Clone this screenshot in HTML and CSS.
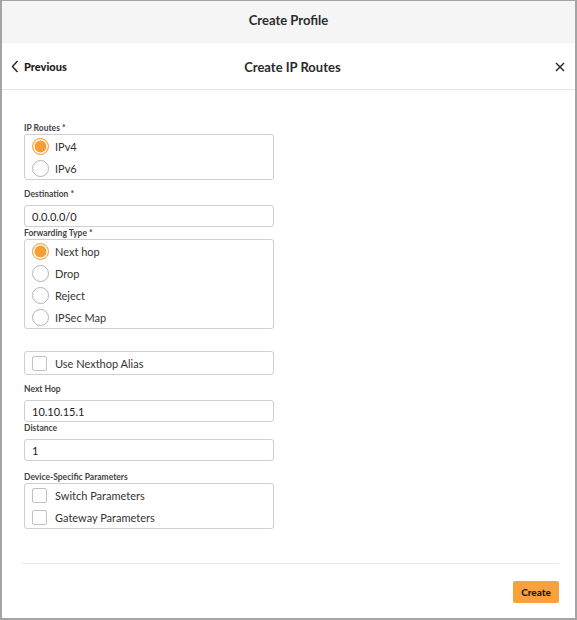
FILE: index.html
```html
<!DOCTYPE html>
<html lang="en">
<head>
  <meta charset="UTF-8">
  <meta name="viewport" content="width=device-width, initial-scale=1.0">
  <title>Create Profile</title>
  <link rel="stylesheet" href="styles.css">
</head>
<body>
  <div class="frame">
    <div class="header">Create Profile</div>

    <div class="nav">
      <button class="nav-back" type="button">
        <svg width="8" height="13" viewBox="0 0 8 13"><path d="M6.5 1 L1.5 6.5 L6.5 12" fill="none" stroke="#222" stroke-width="1.4"/></svg>
        Previous
      </button>
      <div class="nav-title">Create IP Routes</div>
      <button class="nav-close" type="button" aria-label="Close">
        <svg width="10" height="10" viewBox="0 0 10 10"><path d="M1 1 L9 9 M9 1 L1 9" fill="none" stroke="#222" stroke-width="1.4"/></svg>
      </button>
    </div>

    <form class="form" id="routeForm">
      <div class="label">IP Routes *</div>
      <div class="options">
        <label class="option"><span class="radio checked"></span>IPv4</label>
        <label class="option"><span class="radio"></span>IPv6</label>
      </div>

      <div class="label spaced">Destination *</div>
      <input class="input" type="text" value="0.0.0.0/0">

      <div class="label">Forwarding Type *</div>
      <div class="options">
        <label class="option"><span class="radio checked"></span>Next hop</label>
        <label class="option"><span class="radio"></span>Drop</label>
        <label class="option"><span class="radio"></span>Reject</label>
        <label class="option"><span class="radio"></span>IPSec Map</label>
      </div>

      <div class="options single">
        <label class="option"><span class="check"></span>Use Nexthop Alias</label>
      </div>

      <div class="label spaced">Next Hop</div>
      <input class="input" type="text" value="10.10.15.1">

      <div class="label">Distance</div>
      <input class="input" type="text" value="1">

      <div class="label spaced-lg">Device-Specific Parameters</div>
      <div class="options">
        <label class="option"><span class="check"></span>Switch Parameters</label>
        <label class="option"><span class="check"></span>Gateway Parameters</label>
      </div>
    </form>

    <div class="footer">
      <button class="btn-create" type="submit" form="routeForm">Create</button>
    </div>
  </div>
</body>
</html>
```

FILE: styles.css
```css
* {
  box-sizing: border-box;
}
body {
  margin: 0;
  font-family: 'Lato', 'Noto Sans', sans-serif;
  color: #333;
  background: #fff;
}
.frame {
  width: 577px;
  height: 620px;
  border: 2px solid #a4a4a4;
  border-top-width: 1px;
  display: flex;
  flex-direction: column;
}
.header {
  height: 42px;
  padding-bottom: 4px;
  background: #f5f5f5;
  display: flex;
  align-items: center;
  justify-content: center;
  font-size: 13px;
  font-weight: 700;
  color: #2b2b2b;
}
.nav {
  height: 47px;
  border-bottom: 1px solid #e6e6e6;
  display: flex;
  align-items: center;
  padding: 1px 9px 0 9px;
}
.nav button {
  background: none;
  border: none;
  padding: 0;
  cursor: pointer;
  font-family: inherit;
}
.nav-back {
  display: flex;
  align-items: center;
  gap: 5px;
  font-size: 11px;
  font-weight: 900;
  color: #1a1a1a;
}
.nav-title {
  flex: 1;
  text-align: center;
  font-size: 13px;
  font-weight: 700;
  color: #2b2b2b;
  margin-right: 36px;
}
.nav-close {
  display: flex;
  width: 12px;
  height: 12px;
  align-items: center;
  justify-content: center;
}
.form {
  flex: 1;
  padding: 32px 0 0 22px;
  display: flex;
  flex-direction: column;
  align-items: flex-start;
}
.label {
  height: 12px;
  line-height: 12px;
  font-size: 8.5px;
  font-weight: 700;
  color: #444;
}
.label.spaced {
  margin-top: 8px;
}
.label.spaced-lg {
  margin-top: 10px;
}
.options {
  width: 250px;
  border: 1px solid #cfcfcf;
  border-radius: 3px;
  display: flex;
  flex-direction: column;
}
.options.single {
  margin-top: 22px;
}
.option {
  height: 22px;
  display: flex;
  align-items: center;
  padding-left: 7px;
  font-size: 11px;
  color: #333;
}
.radio {
  width: 17px;
  height: 17px;
  border-radius: 50%;
  border: 1px solid #b3b3b3;
  margin-right: 6px;
  background: #fff;
}
.radio.checked {
  border-color: #f8a444;
  background: #f89e34;
  box-shadow: inset 0 0 0 1.5px #fff;
}
.check {
  width: 15px;
  height: 15px;
  border: 1px solid #c2c2c2;
  border-radius: 2px;
  margin-right: 8px;
}
.input {
  width: 250px;
  height: 22px;
  margin-top: 5px;
  border: 1px solid #cfcfcf;
  border-radius: 3px;
  padding: 0 7px;
  font-family: inherit;
  font-size: 11px;
  color: #222;
}
.footer {
  margin: 0 16px 0 20px;
  border-top: 1px solid #e8e8e8;
  height: 55px;
  display: flex;
  justify-content: flex-end;
  align-items: flex-start;
  padding-top: 17px;
}
.btn-create {
  width: 46px;
  height: 22px;
  background: #f9a13d;
  border: none;
  border-radius: 2px;
  font-family: inherit;
  font-size: 10px;
  font-weight: 900;
  color: #1a1a1a;
  cursor: pointer;
}
```
